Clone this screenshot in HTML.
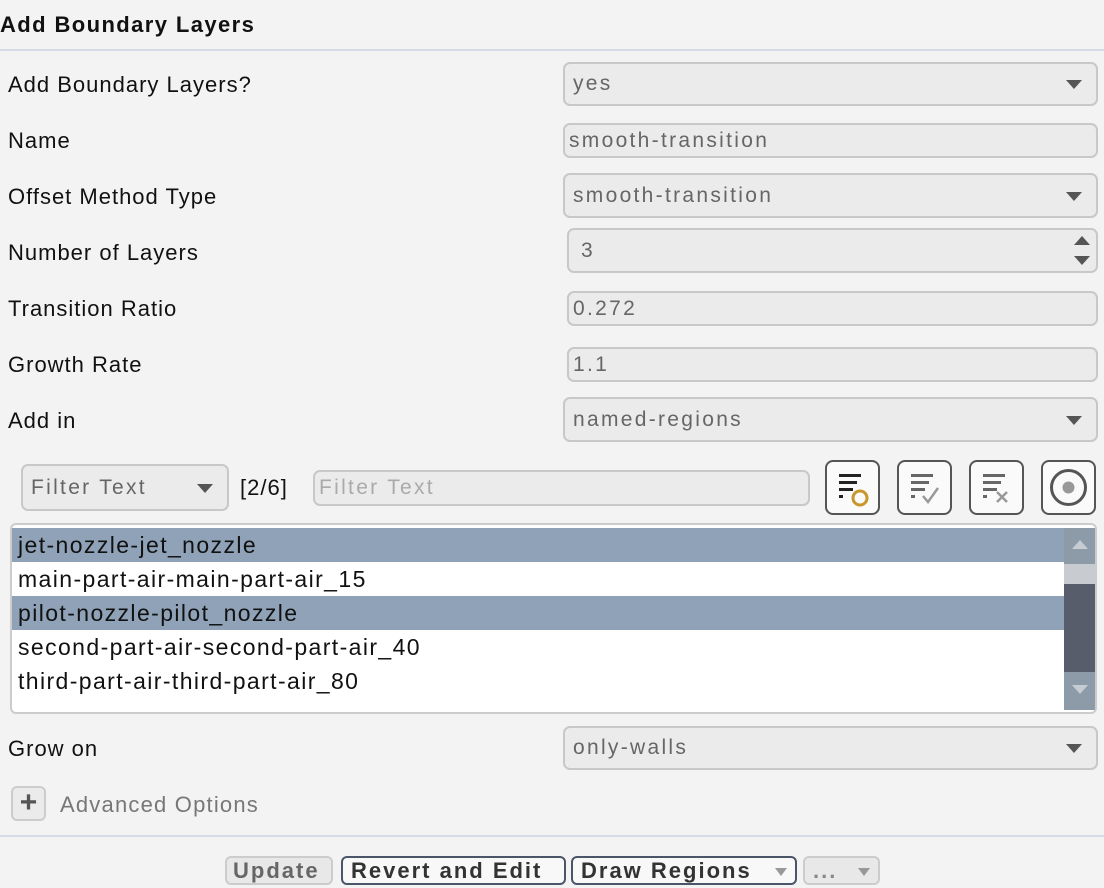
<!DOCTYPE html>
<html><head><style>
*{box-sizing:border-box;margin:0;padding:0}
body{width:1104px;height:888px;background:#f3f3f3;font-family:"Liberation Sans",sans-serif;position:relative;overflow:hidden;color:#111}
.a{position:absolute}
.lbl{position:absolute;left:8px;font-size:22px;color:#111;line-height:26px;letter-spacing:1px}
.fld{position:absolute;background:#ebebeb;border:2px solid #c8c8c8;border-radius:7px;font-size:21px;color:#666;padding-left:8px;display:flex;align-items:center;letter-spacing:2.3px}
.arr{position:absolute;right:14px;top:50%;margin-top:-4px;width:0;height:0;border-left:8px solid transparent;border-right:8px solid transparent;border-top:9px solid #555}
.ib{position:absolute;top:460px;width:55px;height:55px;border:2px solid #555;border-radius:8px;background:#fafafa}
.row{position:absolute;left:12px;width:1052px;height:34px;font-size:23px;line-height:34px;padding-left:6px;color:#111;letter-spacing:1.4px}
.btn{position:absolute;top:856px;height:29px;border:2px solid #4a5568;border-radius:6px;font-size:22px;font-weight:bold;line-height:25px;padding:0 8px;color:#333;background:#f8f8f8;letter-spacing:2px;white-space:nowrap;overflow:hidden}
</style></head><body>
<div class="a" style="left:0;top:10px;font-size:22px;font-weight:bold;line-height:30px;letter-spacing:1.4px">Add Boundary Layers</div>
<div class="a" style="left:0;top:49px;width:1104px;height:2px;background:#d6dbe6"></div>

<div class="lbl" style="top:72px">Add Boundary Layers?</div>
<div class="fld" style="left:563px;top:62px;width:535px;height:44px">yes<div class="arr"></div></div>
<div class="lbl" style="top:128px">Name</div>
<div class="fld" style="left:563px;top:123px;width:535px;height:35px;padding-left:4px">smooth-transition</div>
<div class="lbl" style="top:184px">Offset Method Type</div>
<div class="fld" style="left:563px;top:173px;width:535px;height:45px">smooth-transition<div class="arr"></div></div>
<div class="lbl" style="top:240px">Number of Layers</div>
<div class="fld" style="left:567px;top:228px;width:531px;height:45px;padding-left:12px">3
<div class="a" style="right:6px;top:6px;border-left:8px solid transparent;border-right:8px solid transparent;border-bottom:9px solid #555"></div>
<div class="a" style="right:6px;bottom:6px;border-left:8px solid transparent;border-right:8px solid transparent;border-top:9px solid #555"></div></div>
<div class="lbl" style="top:296px">Transition Ratio</div>
<div class="fld" style="left:567px;top:291px;width:531px;height:35px;padding-left:4px">0.272</div>
<div class="lbl" style="top:352px">Growth Rate</div>
<div class="fld" style="left:567px;top:347px;width:531px;height:35px;padding-left:4px">1.1</div>
<div class="lbl" style="top:408px">Add in</div>
<div class="fld" style="left:563px;top:397px;width:535px;height:45px">named-regions<div class="arr"></div></div>

<div class="fld" style="left:21px;top:464px;width:208px;height:47px">Filter Text<div class="arr"></div></div>
<div class="a" style="left:240px;top:475px;font-size:22px;letter-spacing:1px">[2/6]</div>
<div class="fld" style="left:313px;top:470px;width:497px;height:36px;padding-left:4px;color:#aaa">Filter Text</div>

<div class="ib" style="left:825px"><svg width="51" height="51" viewBox="0 0 51 51"><g fill="#222"><rect x="12" y="12" width="22" height="3"/><rect x="12" y="19" width="18" height="3"/><rect x="12" y="26" width="14" height="3"/><rect x="12" y="33" width="4" height="3"/></g><circle cx="33" cy="36" r="7" fill="none" stroke="#c8962a" stroke-width="3"/></svg></div>
<div class="ib" style="left:897px"><svg width="51" height="51" viewBox="0 0 51 51"><g fill="#666"><rect x="12" y="12" width="22" height="3"/><rect x="12" y="19" width="18" height="3"/><rect x="12" y="26" width="14" height="3"/><rect x="12" y="33" width="4" height="3"/></g><path d="M24 34l5 6 10-14" fill="none" stroke="#999" stroke-width="2.5"/></svg></div>
<div class="ib" style="left:969px"><svg width="51" height="51" viewBox="0 0 51 51"><g fill="#666"><rect x="12" y="12" width="22" height="3"/><rect x="12" y="19" width="18" height="3"/><rect x="12" y="26" width="14" height="3"/><rect x="12" y="33" width="4" height="3"/></g><path d="M26 30l10 10M36 30l-10 10" stroke="#999" stroke-width="2.5"/></svg></div>
<div class="ib" style="left:1041px"><svg width="51" height="51" viewBox="0 0 51 51"><circle cx="25.5" cy="25.5" r="17" fill="none" stroke="#555" stroke-width="3"/><circle cx="25.5" cy="25.5" r="6" fill="#999"/></svg></div>

<div class="a" style="left:10px;top:523px;width:1087px;height:191px;background:#fff;border:2px solid #ccc;border-radius:6px"></div>
<div class="row" style="top:528px;background:#8fa2b8">jet-nozzle-jet_nozzle</div>
<div class="row" style="top:562px">main-part-air-main-part-air_15</div>
<div class="row" style="top:596px;background:#8fa2b8">pilot-nozzle-pilot_nozzle</div>
<div class="row" style="top:630px">second-part-air-second-part-air_40</div>
<div class="row" style="top:664px">third-part-air-third-part-air_80</div>
<div class="a" style="left:1064px;top:528px;width:31px;height:182px;background:#8d9aa8"></div>
<div class="a" style="left:1064px;top:564px;width:31px;height:20px;background:#c8ccd0"></div>
<div class="a" style="left:1064px;top:584px;width:31px;height:88px;background:#575d6b"></div>
<div class="a" style="left:1072px;top:540px;border-left:8px solid transparent;border-right:8px solid transparent;border-bottom:9px solid #c5ccd4"></div>
<div class="a" style="left:1072px;top:685px;border-left:8px solid transparent;border-right:8px solid transparent;border-top:9px solid #c5ccd4"></div>

<div class="lbl" style="top:736px">Grow on</div>
<div class="fld" style="left:563px;top:726px;width:535px;height:44px">only-walls<div class="arr"></div></div>

<div class="a" style="left:11px;top:786px;width:35px;height:35px;border:2px solid #ccc;border-radius:6px;background:#ebebeb;font-size:30px;font-weight:bold;color:#555;text-align:center;line-height:30px">+</div>
<div class="a" style="left:60px;top:792px;font-size:22px;color:#777;letter-spacing:1.2px">Advanced Options</div>
<div class="a" style="left:0;top:835px;width:1104px;height:2px;background:#d6dbe6"></div>

<div class="btn" style="left:225px;width:108px;border-color:#ccc;background:#e8e8e8;color:#666;padding:0 6px">Update</div>
<div class="btn" style="left:341px;width:225px">Revert and Edit</div>
<div class="btn" style="left:571px;width:226px">Draw Regions<div class="a" style="right:8px;top:10px;border-left:6px solid transparent;border-right:6px solid transparent;border-top:8px solid #999"></div></div>
<div class="btn" style="left:803px;width:77px;border-color:#ccc;background:#e8e8e8;color:#888">...<div class="a" style="right:8px;top:10px;border-left:6px solid transparent;border-right:6px solid transparent;border-top:8px solid #999"></div></div>
</body></html>
